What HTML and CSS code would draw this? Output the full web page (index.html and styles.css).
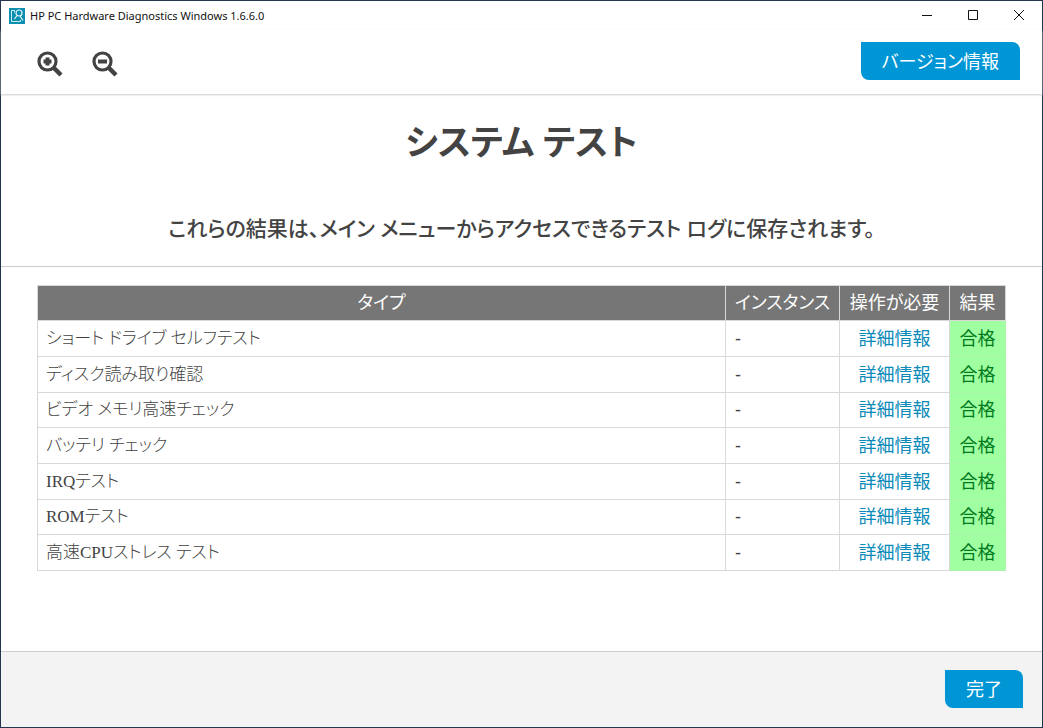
FILE: index.html
```html
<!DOCTYPE html>
<html lang="ja">
<head>
<meta charset="utf-8">
<meta name="viewport" content="width=device-width, initial-scale=1">
<title>HP PC Hardware Diagnostics Windows 1.6.6.0</title>
<link rel="stylesheet" href="styles.css">
</head>
<body>
<div class="window">
  <header class="titlebar">
    <svg class="app-icon" viewBox="0 0 16 16" aria-hidden="true">
      <rect width="16" height="16" fill="#0d8fb0"/>
      <path d="M5.500 2.500H2.500V13.500H11.500V12M5.500 2.500V4.500" fill="none" stroke="#c9edf5" stroke-width="1"/>
      <circle cx="10" cy="5" r="3" fill="none" stroke="#e4f7fb" stroke-width="1.200"/>
      <path d="M8 7.500L5.500 11M11 8L14 12.500" stroke="#e4f7fb" stroke-width="1.200"/>
    </svg>
    <span class="app-name">HP PC Hardware Diagnostics Windows 1.6.6.0</span>
    <button class="win-button" type="button" aria-label="最小化">
      <svg viewBox="0 0 12 12"><path d="M1 5.500H11"/></svg>
    </button>
    <button class="win-button" type="button" aria-label="最大化">
      <svg viewBox="0 0 12 12"><path d="M1.500 0.500H10.500V9.500H1.500Z"/></svg>
    </button>
    <button class="win-button" type="button" aria-label="閉じる">
      <svg viewBox="0 0 12 12"><path d="M1 0L11 10M11 0L1 10"/></svg>
    </button>
  </header>

  <nav class="toolbar">
    <button class="zoom-button" type="button" aria-label="拡大">
      <svg viewBox="0 0 26 26"><circle cx="10.500" cy="10.500" r="8.500" stroke-width="3.200"/><path d="M16.500 16.500L24 24" stroke-width="4.500"/><path d="M10.500 6.500V14.500M6.500 10.500H14.500" stroke-width="4"/></svg>
    </button>
    <button class="zoom-button" type="button" aria-label="縮小">
      <svg viewBox="0 0 26 26"><circle cx="10.500" cy="10.500" r="8.500" stroke-width="3.200"/><path d="M16.500 16.500L24 24" stroke-width="4.500"/><path d="M6 10.500H15" stroke-width="4"/></svg>
    </button>
    <button class="action toolbar-action" type="button">バージョン情報</button>
  </nav>

  <main class="content">
    <section class="intro">
      <h1 class="title">システム テスト</h1>
      <h2 class="subtitle">これらの結果は、メイン メニューからアクセスできるテスト ログに保存されます。</h2>
    </section>
    <section class="results">
      <table class="result-table">
        <thead>
          <tr><th>タイプ</th><th class="col-instance">インスタンス</th><th class="col-action">操作が必要</th><th class="col-result">結果</th></tr>
        </thead>
        <tbody>
          <tr><td class="type">ショート ドライブ セルフテスト</td><td class="instance">-</td><td class="detail"><a href="#">詳細情報</a></td><td class="pass">合格</td></tr>
          <tr><td class="type">ディスク読み取り確認</td><td class="instance">-</td><td class="detail"><a href="#">詳細情報</a></td><td class="pass">合格</td></tr>
          <tr><td class="type">ビデオ メモリ高速チェック</td><td class="instance">-</td><td class="detail"><a href="#">詳細情報</a></td><td class="pass">合格</td></tr>
          <tr><td class="type">バッテリ チェック</td><td class="instance">-</td><td class="detail"><a href="#">詳細情報</a></td><td class="pass">合格</td></tr>
          <tr><td class="type">IRQテスト</td><td class="instance">-</td><td class="detail"><a href="#">詳細情報</a></td><td class="pass">合格</td></tr>
          <tr><td class="type">ROMテスト</td><td class="instance">-</td><td class="detail"><a href="#">詳細情報</a></td><td class="pass">合格</td></tr>
          <tr><td class="type">高速CPUストレス テスト</td><td class="instance">-</td><td class="detail"><a href="#">詳細情報</a></td><td class="pass">合格</td></tr>
        </tbody>
      </table>
    </section>
  </main>

  <footer class="footer">
    <button class="action" type="button">完了</button>
  </footer>
</div>
</body>
</html>
```

FILE: styles.css
```css
* {
  box-sizing: border-box;
}

body {
  margin: 0;
  color: #434343;
  font-family: "Liberation Serif", "Noto Sans CJK JP", serif;
  font-size: 18px;
  font-feature-settings: "palt";
}

button {
  margin: 0;
  padding: 0;
  border: 0;
  background: none;
  font: inherit;
  font-feature-settings: inherit;
}

.window {
  display: flex;
  flex-direction: column;
  min-height: 100vh;
  border: 1px solid #24364d;
  background: #fff;
}

.titlebar {
  display: flex;
  align-items: center;
  height: 29px;
  padding-left: 8px;
  color: #111;
  font-family: "Noto Sans", sans-serif;
  font-size: 11px;
}

.app-icon {
  width: 16px;
  height: 16px;
  margin-right: 5px;
}

.app-name {
  flex: 1;
}

.win-button {
  display: flex;
  align-items: center;
  justify-content: center;
  width: 46px;
  height: 28px;
}

.win-button svg {
  width: 12px;
  height: 12px;
  fill: none;
  stroke: #111;
  stroke-width: 1;
}

.toolbar {
  display: flex;
  align-items: flex-start;
  gap: 28px;
  height: 64px;
  padding: 12px 22px 0 36px;
  box-shadow: 0 1px 2px #ccc;
}

.zoom-button {
  display: flex;
  align-items: center;
  width: 27px;
  height: 44px;
}

.zoom-button svg {
  width: 26px;
  height: 26px;
  fill: none;
  stroke: #434343;
}

.action {
  height: 38px;
  padding: 0 21px 2px;
  border-radius: 0 8px;
  background: #0096d6;
  color: #fff;
}

.toolbar-action {
  margin-left: auto;
}

.content {
  flex: 1;
}

.intro {
  padding: 22px 16px 25px;
  border-bottom: 1px solid #ccc;
  text-align: center;
}

.title {
  margin: 0 0 45px;
  font-size: 35px;
  line-height: 56px;
}

.subtitle {
  margin: 0;
  font-size: 21px;
  font-weight: 500;
  line-height: 24px;
}

.results {
  padding: 18px 36px;
}

.result-table {
  width: 100%;
  border-collapse: collapse;
}

.result-table th,
.result-table td {
  height: 36px;
  padding: 0 8px;
  border: 1px solid #d8d8d8;
  line-height: 24px;
  text-align: left;
}

.result-table tr:nth-child(3n) td {
  height: 35px;
}

.result-table th {
  height: 35px;
  background: #767676;
  color: #fff;
  font-weight: 400;
  text-align: center;
  white-space: nowrap;
}

.col-instance {
  width: 114px;
}

.col-action {
  width: 110px;
}

.col-result {
  width: 56px;
}

.result-table .type {
  font-size: 17px;
  font-weight: 300;
}

.result-table .instance {
  padding-left: 9px;
  font-family: "Liberation Sans", sans-serif;
}

.result-table .detail,
.result-table .pass {
  text-align: center;
}

.detail a {
  color: #0a8ab8;
  text-decoration: none;
}

.result-table .pass {
  border-color: #a8f5a8;
  background: #a0ffa0;
  color: #007a1e;
}

.footer {
  display: flex;
  align-items: center;
  justify-content: flex-end;
  height: 76px;
  padding: 0 19px 2px;
  border-top: 1px solid #ccc;
  background: #f3f3f3;
}
```
